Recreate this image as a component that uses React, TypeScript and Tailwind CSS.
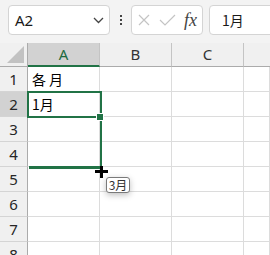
import React from "react";

const ui = { fontFamily: '"Noto Sans", "Open Sans", sans-serif' };
const cjk = { fontFamily: '"Noto Sans CJK JP", "Noto Sans", sans-serif' };

function RowHeader({ n, active }: { n: number; active?: boolean }) {
  return (
    <div
      className={`h-[25px] flex items-center justify-center border-r border-r-[#ababab] border-b border-b-[#d4d4d4] text-[15px] text-[#262626] ${
        active ? "bg-[#d2d2d2]" : "bg-[#f0f0f0]"
      }`}
      style={ui}
    >
      {n}
    </div>
  );
}

function Cell({ children, wide }: { children?: React.ReactNode; wide?: boolean }) {
  return (
    <div
      className={`h-[25px] flex items-center pl-[4px] border-r border-b border-[#dcdcdc] text-[14px] text-black overflow-hidden whitespace-nowrap ${
        wide ? "tracking-[3px]" : ""
      }`}
      style={cjk}
    >
      {children}
    </div>
  );
}

export default function App() {
  const rows = [1, 2, 3, 4, 5, 6, 7, 8];
  return (
    <div className="relative w-[270px] h-[255px] overflow-hidden bg-white">
      {/* formula bar */}
      <div className="h-[43px] bg-[#f3f3f3] flex items-start pt-[5px] pl-[8px]">
        <div className="w-[102px] h-[30px] shrink-0 bg-white border border-[#d4d4d4] rounded-[4px] flex items-center justify-between pl-[6px] pr-[5px]">
          <span className="text-[15px] text-[#1a1a1a]" style={ui}>
            A2
          </span>
          <svg width="11" height="7" viewBox="0 0 11 7">
            <path d="M1 1 L5.5 5.5 L10 1" fill="none" stroke="#444" strokeWidth="1.3" />
          </svg>
        </div>
        <div className="w-[21px] h-[30px] shrink-0 flex flex-col items-center justify-center gap-[2px]">
          <div className="w-[2px] h-[2px] bg-[#444]" />
          <div className="w-[2px] h-[2px] bg-[#444]" />
          <div className="w-[2px] h-[2px] bg-[#444]" />
        </div>
        <div className="w-[72px] h-[30px] shrink-0 bg-white border border-[#d4d4d4] rounded-[4px] flex items-center pl-[6px]">
          <svg width="12" height="12" viewBox="0 0 12 12" className="shrink-0">
            <path d="M1 1 L11 11 M11 1 L1 11" stroke="#c4c4c4" strokeWidth="1.2" fill="none" />
          </svg>
          <svg width="17" height="12" viewBox="0 0 17 12" className="ml-[9px] shrink-0">
            <path d="M1 6 L6 11 L16 1" stroke="#c4c4c4" strokeWidth="1.2" fill="none" />
          </svg>
          <span
            className="ml-[8px] text-[18px] italic text-[#444] leading-none"
            style={{ fontFamily: '"Liberation Serif", "DejaVu Serif", serif' }}
          >
            fx
          </span>
        </div>
        <div className="w-[72px] h-[30px] shrink-0 ml-[6px] bg-white border border-[#d4d4d4] rounded-[4px] flex items-center pl-[12px]">
          <span className="text-[14px] text-[#1a1a1a]" style={cjk}>
            1月
          </span>
        </div>
      </div>

      {/* grid */}
      <div className="grid grid-cols-[28px_72px_72px_72px_1fr]">
        {/* header row */}
        <div className="h-[24px] bg-[#f0f0f0] border-r border-r-[#ababab] border-b border-b-[#ababab] flex items-end justify-end pr-[3px] pb-[3px]">
          <svg width="17" height="17" viewBox="0 0 17 17">
            <path d="M17 0 L17 17 L0 17 Z" fill="#c2c2c2" />
          </svg>
        </div>
        <div
          className="h-[24px] bg-[#d2d2d2] border-r border-r-[#c4c4c4] border-b-2 border-b-[#217346] flex items-center justify-center text-[15px] text-[#1d6b3f]"
          style={ui}
        >
          A
        </div>
        <div
          className="h-[24px] bg-[#f0f0f0] border-r border-r-[#c4c4c4] border-b border-b-[#ababab] flex items-center justify-center text-[15px] text-[#333]"
          style={ui}
        >
          B
        </div>
        <div
          className="h-[24px] bg-[#f0f0f0] border-r border-r-[#c4c4c4] border-b border-b-[#ababab] flex items-center justify-center text-[15px] text-[#333]"
          style={ui}
        >
          C
        </div>
        <div className="h-[24px] bg-[#f0f0f0] border-b border-b-[#ababab]" />

        {rows.map((r) => (
          <React.Fragment key={r}>
            <RowHeader n={r} active={r === 2} />
            <Cell wide={r === 1}>{r === 1 ? "各月" : r === 2 ? "1月" : null}</Cell>
            <Cell />
            <Cell />
            <Cell />
          </React.Fragment>
        ))}
      </div>

      {/* selection overlay */}
      <div className="absolute left-[27px] top-[91px] w-[75px] h-[27px] border-2 border-[#217346]" />
      <div className="absolute left-[100px] top-[117px] w-[2px] h-[51px] bg-[#217346]" />
      <div className="absolute left-[29px] top-[166px] w-[73px] h-[3px] bg-[#217346]" />
      <div className="absolute left-[96px] top-[113px] w-[8px] h-[8px] bg-[#217346] border border-white" />

      {/* fill cursor */}
      <div className="absolute left-[100px] top-[166px] w-[3px] h-[12px] bg-black" />
      <div className="absolute left-[95px] top-[170px] w-[13px] h-[3px] bg-black" />

      {/* tooltip */}
      <div
        className="absolute left-[106px] top-[177px] w-[24px] h-[16px] bg-white border border-[#7a7a7a] rounded-[3px] shadow-[0_2px_6px_rgba(0,0,0,0.25)] flex items-center justify-center text-[12px] text-[#333] leading-none"
        style={cjk}
      >
        3月
      </div>
    </div>
  );
}
